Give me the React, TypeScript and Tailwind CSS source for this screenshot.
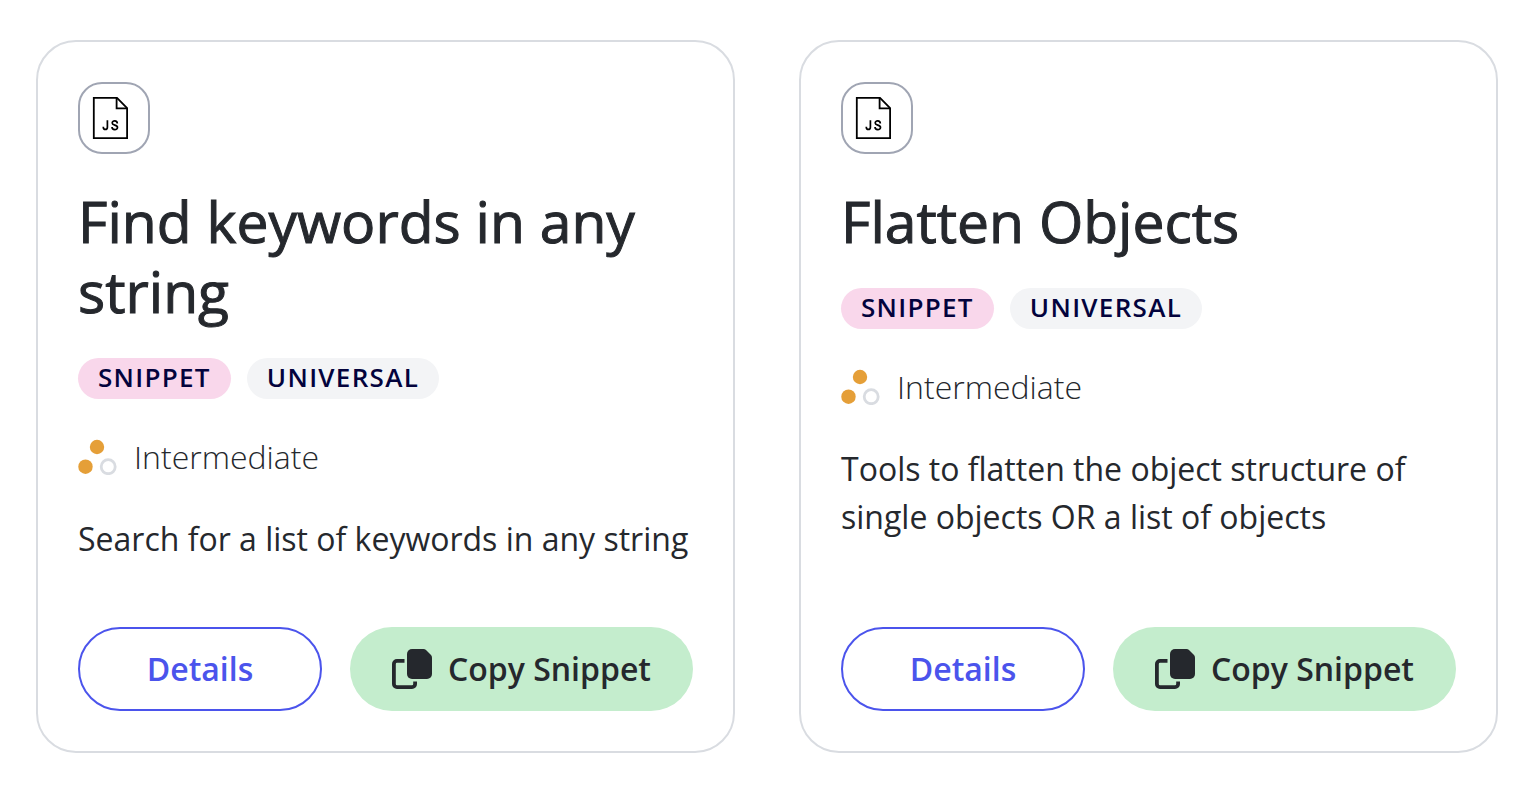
import React from "react";

type Snippet = { title: string; level: string; description: string };

const snippets: Snippet[] = [
  {
    title: "Find keywords in any string",
    level: "Intermediate",
    description: "Search for a list of keywords in any string",
  },
  {
    title: "Flatten Objects",
    level: "Intermediate",
    description: "Tools to flatten the object structure of single objects OR a list of objects",
  },
];

function JsFileIcon() {
  return (
    <svg className="h-11 w-9" viewBox="0 0 36 44" fill="none" stroke="#000" aria-hidden="true">
      <path d="M1.800 1.900H25L35.100 12V42.100H1.800Z" strokeWidth="1.800" />
      <path d="M24.600 2V12.400H35" strokeWidth="1.800" />
      <path d="M15.400 24.300V31.200C15.400 34.200 11.300 34.200 11.300 31.200V30.800" strokeWidth="1.700" />
      <path d="M25.300 27.600C25.300 24 20.200 24.100 20.200 27C20.200 29.700 25.500 28.500 25.500 31.400C25.500 34.400 20 34.400 20 30.900" strokeWidth="1.700" />
    </svg>
  );
}

function LevelIcon() {
  return (
    <svg className="h-9 w-10" viewBox="0 0 40 36" aria-hidden="true">
      <circle cx="19" cy="8" r="7.200" fill="#e59f38" />
      <circle cx="7.500" cy="27.700" r="7.200" fill="#e59f38" />
      <circle cx="30.200" cy="27.700" r="7" fill="#fff" stroke="#d9dce1" strokeWidth="2.800" />
    </svg>
  );
}

function CopyIcon() {
  return (
    <svg className="size-10" viewBox="0 0 40 40" fill="none" aria-hidden="true">
      <path d="M20 0H31.500Q33 0 34 1L39 6Q40 7 40 8.500V25A5 5 0 0 1 35 30H20A5 5 0 0 1 15 25V5A5 5 0 0 1 20 0Z" fill="#25282d" />
      <path d="M12.500 11.900H5A3.100 3.100 0 0 0 1.900 15V35A3.100 3.100 0 0 0 5 38.100H20A3.100 3.100 0 0 0 23.100 35V32.500" stroke="#25282d" strokeWidth="3.800" />
    </svg>
  );
}

function SnippetCard({ title, level, description }: Snippet) {
  return (
    <article className="flex flex-col rounded-[40px] border-2 border-[#d9dce1] p-10">
      <div className="flex size-18 items-center rounded-3xl border-2 border-[#a0a5b3] pl-3">
        <JsFileIcon />
      </div>
      <h2 className="mt-8 text-[57px] leading-[70px] font-medium [-webkit-text-stroke:1px_#25282d]">{title}</h2>
      <div className="mt-8 flex gap-4 text-[26px] leading-[38px] font-semibold tracking-wider text-[#03033d]">
        <span className="rounded-full bg-[#f9d7eb] px-5 pb-[3px]">SNIPPET</span>
        <span className="rounded-full bg-[#f3f4f6] px-5 pb-[3px]">UNIVERSAL</span>
      </div>
      <div className="mt-[34px] flex items-center gap-4 text-[32px] leading-12 font-light">
        <LevelIcon />
        <span>{level}</span>
      </div>
      <p className="mt-[34px] text-[32px] leading-12">{description}</p>
      <div className="mt-auto flex gap-7 pt-16 text-[32px] font-semibold">
        <button className="h-21 w-61 rounded-full border-2 border-[#4b54ec] text-[#4b54ec]">Details</button>
        <button className="flex h-21 flex-1 items-center justify-center gap-4 rounded-full bg-[#c4edcd]">
          <CopyIcon />
          Copy Snippet
        </button>
      </div>
    </article>
  );
}

export default function App() {
  return (
    <main className="grid grid-cols-2 gap-16 bg-white pt-10 pr-10 pb-9 pl-9 font-['Open_Sans',sans-serif] text-[#25282d]">
      {snippets.map((snippet) => (
        <SnippetCard key={snippet.title} {...snippet} />
      ))}
    </main>
  );
}
